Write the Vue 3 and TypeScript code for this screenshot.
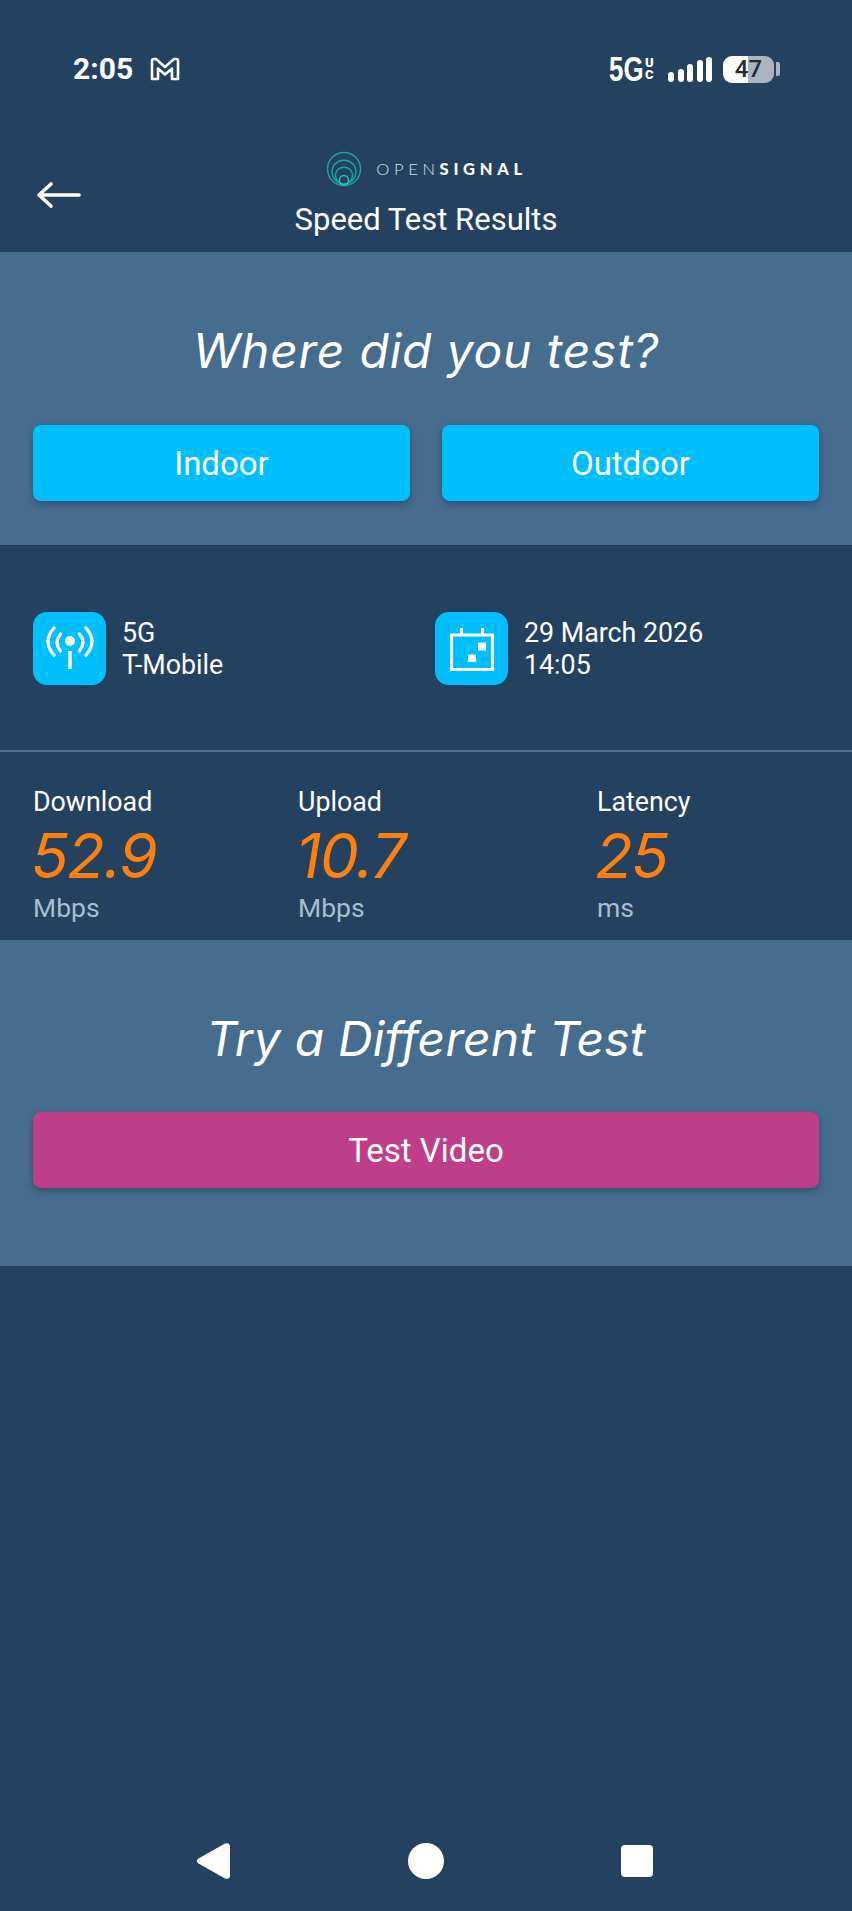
<script setup lang="ts">
type Stat = { label: string; value: string; unit: string };

const stats: Stat[] = [
  { label: 'Download', value: '52.9', unit: 'Mbps' },
  { label: 'Upload', value: '10.7', unit: 'Mbps' },
  { label: 'Latency', value: '25', unit: 'ms' },
];
const signalBars = [10, 13, 18, 22, 25];
</script>

<template>
  <div class="page">
    <div class="status-bar">
      <div class="status-left">
        <span class="clock">2:05</span>
        <svg class="gmail" width="30" height="24" viewBox="0 0 30 24" fill="none" stroke="#fff" stroke-width="2.6" stroke-linejoin="round">
          <path d="M2 3.5 Q2 2 3.6 2 H6 L15 10 L24 2 H26.4 Q28 2 28 3.5 V22 H22 V11.5 L15 17.5 L8 11.5 V22 H2 Z" />
        </svg>
      </div>
      <div class="status-right">
        <span class="net">5G</span>
        <span class="uc"><i>U</i><i>C</i></span>
        <span class="bars">
          <b v-for="h in signalBars" :key="h" :style="{ height: h + 'px' }"></b>
        </span>
        <span class="battery">47</span>
        <span class="battery-tip"></span>
      </div>
    </div>

    <header class="topbar">
      <svg class="back" width="46" height="28" viewBox="0 0 46 28" fill="none" stroke="#fff" stroke-width="3.6" stroke-linecap="round" stroke-linejoin="round">
        <path d="M43 14 H3 M15 3 L3 14 L15 25" />
      </svg>
      <div class="brand">
        <svg width="36" height="36" viewBox="0 0 36 36" fill="none" stroke="#17a8a5" stroke-width="1.4">
          <circle cx="18" cy="18" r="16.5" />
          <path d="M6.5 24 A12 11.5 0 1 1 29.5 24 Q27 32 18 33.5 Q9 32 6.5 24 Z" />
          <path d="M10 27 A8.5 8 0 1 1 26 27 Q24 32 18 33.5 Q12 32 10 27 Z" />
          <circle cx="18" cy="29" r="4.5" stroke="#1fc4b4" />
        </svg>
        <span class="wordmark"><span class="thin">OPEN</span><span class="bold">SIGNAL</span></span>
      </div>
      <h1 class="title">Speed Test Results</h1>
    </header>

    <section class="panel where">
      <h2 class="heading">Where did you test?</h2>
      <div class="choices">
        <button class="btn blue">Indoor</button>
        <button class="btn blue">Outdoor</button>
      </div>
    </section>

    <section class="info">
      <div class="info-item">
        <span class="tile">
          <svg width="50" height="50" viewBox="0 0 50 50" fill="none" stroke="#fff" stroke-width="3.2" stroke-linecap="round">
            <circle cx="25" cy="17" r="5" fill="#fff" stroke="none" />
            <path d="M25 27 V45" stroke-width="3.4" stroke-linecap="butt" />
            <path d="M15.5 10 Q8.500 18.500 15.500 27 M34.500 10 Q41.500 18.500 34.500 27" />
            <path d="M9 4 Q-3 17.500 9 31 M41 4 Q53 17.500 41 31" />
          </svg>
        </span>
        <div class="info-text">
          <span>5G</span>
          <span>T-Mobile</span>
        </div>
      </div>
      <div class="info-item">
        <span class="tile">
          <svg width="46" height="46" viewBox="0 0 46 46" fill="none" stroke="#fff" stroke-width="3">
            <rect x="2.500" y="9" width="41" height="34.500" />
            <path d="M12.500 2 V9 M33.500 2 V9" />
            <rect x="29" y="16.500" width="8" height="8" fill="#fff" stroke="none" />
            <rect x="19" y="28.500" width="8" height="7.500" fill="#fff" stroke="none" />
          </svg>
        </span>
        <div class="info-text">
          <span>29 March 2026</span>
          <span>14:05</span>
        </div>
      </div>
    </section>

    <section class="stats">
      <div v-for="s in stats" :key="s.label" class="stat">
        <span class="stat-label">{{ s.label }}</span>
        <span class="stat-value">{{ s.value }}</span>
        <span class="stat-unit">{{ s.unit }}</span>
      </div>
    </section>

    <section class="panel other">
      <h2 class="heading">Try a Different Test</h2>
      <button class="btn pink">Test Video</button>
    </section>

    <nav class="navbar">
      <svg width="36" height="38" viewBox="0 0 36 38" fill="#fff">
        <path d="M2.500 16.500 L29 1.500 Q34 0 34 5 V33 Q34 38 29 36.500 L2.500 21.500 Q-1 19 2.500 16.500 Z" />
      </svg>
      <span class="nav-circle"></span>
      <span class="nav-square"></span>
    </nav>
  </div>
</template>

<style>
html,
body {
  margin: 0;
  background: #24425f;
}
</style>

<style scoped>
.page {
  width: 852px;
  height: 1911px;
  display: flex;
  flex-direction: column;
  background: #24425f;
  color: #fff;
  font-family: Roboto, "Liberation Sans", sans-serif;
}

.status-bar {
  height: 84px;
  flex: none;
  box-sizing: border-box;
  padding: 54px 72px 0 73px;
  display: flex;
  justify-content: space-between;
  align-items: flex-start;
}

.status-left {
  display: flex;
  align-items: center;
  gap: 17px;
}

.clock {
  font-size: 30px;
  font-weight: 700;
  line-height: 30px;
}

.status-right {
  display: flex;
  align-items: center;
  height: 30px;
}

.net {
  font-family: "Liberation Sans", sans-serif;
  font-size: 35px;
  font-weight: 700;
  line-height: 30px;
  display: inline-block;
  transform: scaleX(0.74);
  transform-origin: left center;
  width: 36px;
  white-space: nowrap;
}

.uc {
  display: flex;
  flex-direction: column;
  width: 9px;
  font-size: 13px;
  font-weight: 900;
  line-height: 12.500px;
}

.uc i {
  font-style: normal;
}

.bars {
  display: flex;
  align-items: flex-end;
  gap: 3.500px;
  margin-left: 14px;
  height: 25px;
}

.bars b {
  width: 6px;
  border-radius: 3px;
  background: #fff;
}

.battery {
  margin-left: 11px;
  width: 51px;
  height: 27px;
  border-radius: 9px;
  background: linear-gradient(90deg, #fff 0 50%, #aab5c2 50%);
  color: #262c33;
  font-size: 24px;
  font-weight: 500;
  line-height: 27px;
  text-align: center;
}

.battery-tip {
  width: 4px;
  height: 14px;
  margin-left: 2px;
  border-radius: 0 2px 2px 0;
  background: #aab5c2;
}

.topbar {
  position: relative;
  height: 168px;
  flex: none;
  box-sizing: border-box;
  padding-top: 67px;
  display: flex;
  flex-direction: column;
  align-items: center;
}

.back {
  position: absolute;
  left: 36px;
  top: 97px;
}

.brand {
  display: flex;
  align-items: center;
  gap: 14px;
  height: 36px;
  margin-left: 1px;
}

.wordmark {
  font-family: Lato, sans-serif;
  font-size: 16.500px;
  letter-spacing: 4.700px;
  white-space: nowrap;
}

.wordmark .thin {
  font-weight: 300;
  color: #d3e0ea;
}

.wordmark .bold {
  font-weight: 900;
}

.title {
  margin: 15px 0 0;
  font-size: 31px;
  font-weight: 400;
  line-height: 36px;
}

.panel {
  flex: none;
  box-sizing: border-box;
  background: #466c8e;
  padding-left: 33px;
  padding-right: 33px;
}

.where {
  height: 293px;
  padding-top: 70px;
}

.where .heading {
  letter-spacing: 0.800px;
}

.other {
  height: 326px;
  padding-top: 70px;
}

.other .heading {
  letter-spacing: 0.200px;
}

.heading {
  margin: 0;
  font-family: Inter, "Open Sans", sans-serif;
  font-size: 48px;
  font-style: italic;
  font-weight: 400;
  line-height: 58px;
  text-align: center;
  white-space: nowrap;
}

.choices {
  display: grid;
  grid-template-columns: 377px 377px;
  justify-content: space-between;
  margin-top: 45px;
}

.btn {
  display: block;
  height: 76px;
  padding: 0;
  border: none;
  border-radius: 8px;
  color: #fff;
  font-family: inherit;
  font-size: 33px;
  box-shadow: 0 3px 6px rgba(15, 35, 55, 0.35);
}

.blue {
  background: #00bfff;
}

.pink {
  width: 100%;
  margin-top: 44px;
  background: #be3e8a;
}

.info {
  height: 207px;
  flex: none;
  box-sizing: border-box;
  padding: 67px 0 0 33px;
  display: grid;
  grid-template-columns: 402px 1fr;
  border-bottom: 2px solid #4f7292;
}

.info-item {
  display: flex;
  gap: 17px;
  align-items: flex-start;
}

.tile {
  width: 73px;
  height: 73px;
  border-radius: 14px;
  background: #00bfff;
  display: flex;
  align-items: center;
  justify-content: center;
}

.info-text {
  display: flex;
  flex-direction: column;
  padding-top: 5px;
  margin-left: -1px;
  font-size: 26.800px;
  line-height: 32px;
}

.stats {
  height: 188px;
  flex: none;
  box-sizing: border-box;
  padding: 32px 0 0 33px;
  display: grid;
  grid-template-columns: 265px 299px 1fr;
}

.stat {
  display: flex;
  flex-direction: column;
}

.stat-label {
  font-size: 26.800px;
  line-height: 36px;
}

.stat-value {
  margin: 4px 0 0 -2px;
  font-family: Inter, sans-serif;
  font-size: 62px;
  font-style: italic;
  font-weight: 400;
  letter-spacing: -1.500px;
  line-height: 64px;
  color: #ff7f0f;
}

.stat-unit {
  margin-top: 4px;
  font-size: 26.500px;
  line-height: 32px;
  color: #a9bdd0;
}

.navbar {
  margin-top: auto;
  height: 100px;
  flex: none;
  position: relative;
}

.navbar svg {
  position: absolute;
  left: 196px;
  top: 31px;
}

.nav-circle {
  position: absolute;
  left: 408px;
  top: 32px;
  width: 36px;
  height: 36px;
  border-radius: 50%;
  background: #fff;
}

.nav-square {
  position: absolute;
  left: 621px;
  top: 34px;
  width: 32px;
  height: 32px;
  border-radius: 4px;
  background: #fff;
}
</style>
